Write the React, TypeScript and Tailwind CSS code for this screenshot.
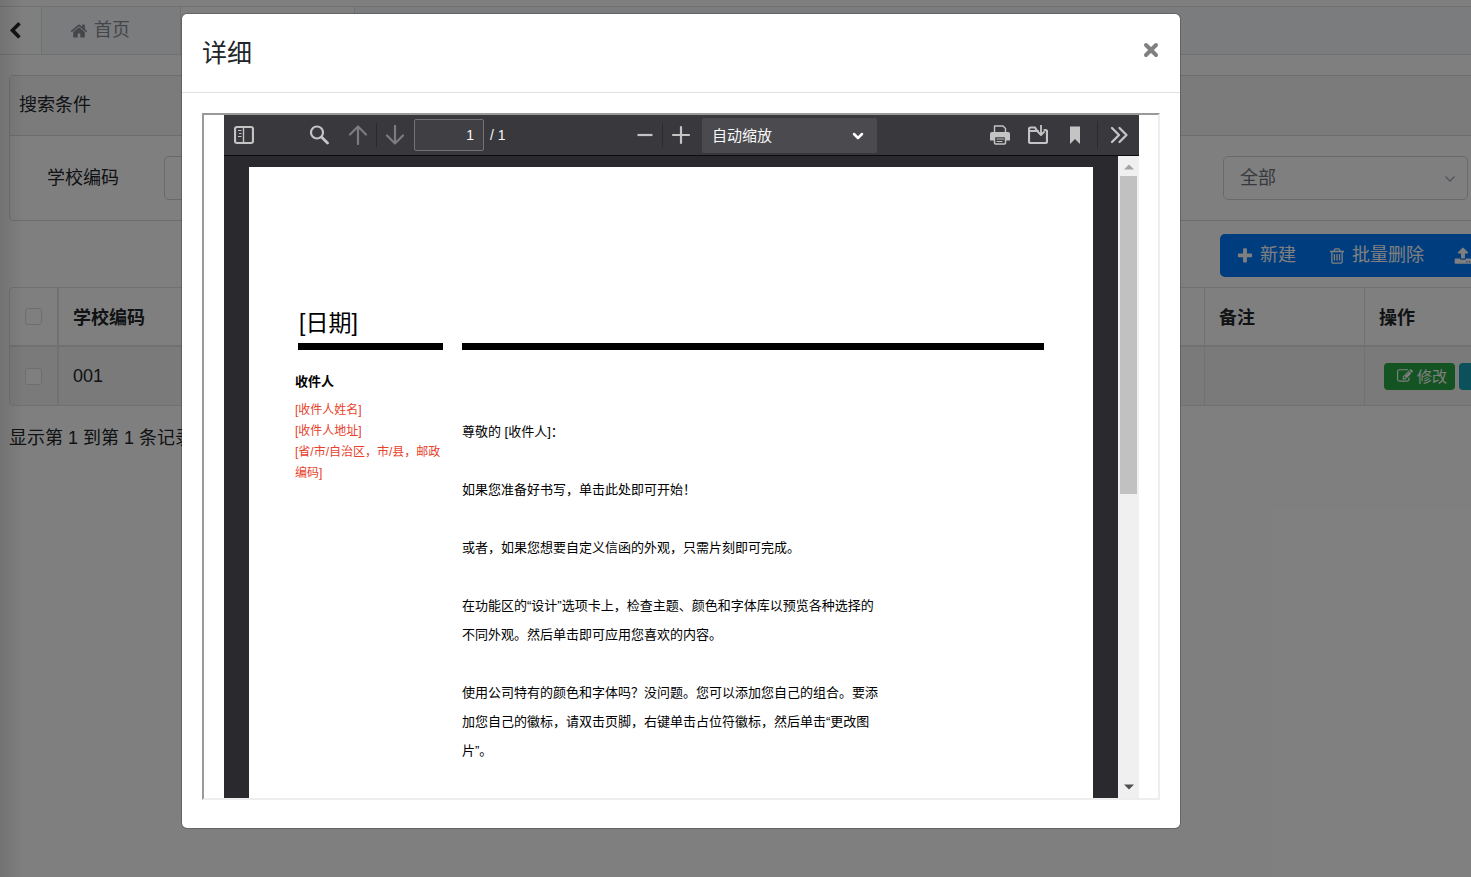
import React from "react";

const paths = {
  plus: "M1600 736v192q0 40-28 68t-68 28h-416v416q0 40-28 68t-68 28h-192q-40 0-68-28t-28-68v-416h-416q-40 0-68-28t-28-68v-192q0-40 28-68t68-28h416v-416q0-40 28-68t68-28h192q40 0 68 28t28 68v416h416q40 0 68 28t28 68z",
  trash:
    "M704 736v576q0 14-9 23t-23 9h-64q-14 0-23-9t-9-23v-576q0-14 9-23t23-9h64q14 0 23 9t9 23zm256 0v576q0 14-9 23t-23 9h-64q-14 0-23-9t-9-23v-576q0-14 9-23t23-9h64q14 0 23 9t9 23zm256 0v576q0 14-9 23t-23 9h-64q-14 0-23-9t-9-23v-576q0-14 9-23t23-9h64q14 0 23 9t9 23zm128 724v-948h-896v948q0 22 7 40.5t14.5 27 10.5 8.5h832q3 0 10.5-8.5t14.5-27 7-40.5zm-672-1076h448l-48-117q-7-9-17-11h-317q-10 2-17 11zm928 32v64q0 14-9 23t-23 9h-96v948q0 83-47 143.5t-113 60.5h-832q-66 0-113-58.5t-47-141.5v-952h-96q-14 0-23-9t-9-23v-64q0-14 9-23t23-9h309l70-167q15-37 54-63t79-26h320q40 0 79 26t54 63l70 167h309q14 0 23 9t9 23z",
  upload:
    "M1344 1472q0-26-19-45t-45-19-45 19-19 45 19 45 45 19 45-19 19-45zm256 0q0-26-19-45t-45-19-45 19-19 45 19 45 45 19 45-19 19-45zm128-224v320q0 40-28 68t-68 28h-1472q-40 0-68-28t-28-68v-320q0-40 28-68t68-28h427q21 56 70.5 92t110.5 36h256q61 0 110.5-36t70.5-92h427q40 0 68 28t28 68zm-325-648q-17 40-59 40h-256v448q0 26-19 45t-45 19h-256q-26 0-45-19t-19-45v-448h-256q-42 0-59-40-17-39 14-69l448-448q18-19 45-19t45 19l448 448q31 30 14 69z",
  home: "M1472 992v480q0 26-19 45t-45 19h-384v-384h-256v384h-384q-26 0-45-19t-19-45v-480q0-1 .5-3t.5-3l575-474 575 474q1 2 1 6zm223-69l-62 74q-8 9-21 11h-3q-13 0-21-7l-692-577-692 577q-12 8-24 7-13-2-21-11l-62-74q-8-10-7-23.5t11-21.5l719-599q32-26 76-26t76 26l244 204v-195q0-14 9-23t23-9h192q14 0 23 9t9 23v408l219 182q10 8 11 21.5t-7 23.5z",
  edit: "M888 1184l116-116-152-152-116 116v56h96v96h56zm440-720q-16-16-33 1l-350 350q-17 17-1 33t33-1l350-350q17-17 1-33zm80 594v190q0 119-84.5 203.5t-203.5 84.5h-832q-119 0-203.5-84.5t-84.5-203.5v-832q0-119 84.5-203.5t203.5-84.5h832q63 0 117 25 15 7 18 23 3 17-9 29l-49 49q-14 14-32 8-23-6-45-6h-832q-66 0-113 47t-47 113v832q0 66 47 113t113 47h832q66 0 113-47t47-113v-126q0-13 9-22l64-64q15-15 35-7t20 29zm-96-738l288 288-672 672h-288v-288zm444 132l-92 92-288-288 92-92q28-28 68-28t68 28l152 152q28 28 28 68t-28 68z",
  back: "M1427 301l-531 531 531 531q19 19 19 45t-19 45l-166 166q-19 19-45 19t-45-19l-742-742q-19-19-19-45t19-45l742-742q19-19 45-19t45 19l166 166q19 19 19 45t-19 45z",
};

function Glyph({ name, className }: { name: keyof typeof paths; className: string }) {
  return (
    <svg viewBox="0 0 1792 1792" fill="currentColor" className={className} aria-hidden="true">
      <path d={paths[name]} />
    </svg>
  );
}

function ToolButton({
  label,
  className,
  children,
}: {
  label: string;
  className: string;
  children: React.ReactNode;
}) {
  return (
    <button type="button" aria-label={label} className={`flex h-8 shrink-0 items-center justify-center ${className}`}>
      <svg
        viewBox="0 0 20 20"
        className="size-5"
        fill="none"
        stroke="currentColor"
        strokeWidth="2.200"
        strokeLinecap="round"
        strokeLinejoin="round"
      >
        {children}
      </svg>
    </button>
  );
}

function TabBar() {
  return (
    <nav className="flex h-[49px] border-y border-[#dee2e6] bg-[#f6f8fb]">
      <button type="button" aria-label="后退" className="flex w-[42px] items-center border-r border-[#dee2e6] bg-white pl-[6px]">
        <Glyph name="back" className="size-[18px] text-[#212529]" />
      </button>
      <a href="#home" className="flex w-[139px] items-center gap-[6px] border-r border-[#dee2e6] pl-7 text-[#868e96]">
        <Glyph name="home" className="size-[18px]" />
        首页
      </a>
      <div className="w-[174px] border-r border-[#dee2e6] bg-white" />
    </nav>
  );
}

function SearchPanel() {
  return (
    <section className="mt-5 rounded border border-[#dcdcdc]">
      <h2 className="flex h-[60px] items-center border-b border-[#dcdcdc] bg-[#f7f7f7] px-[9px]">搜索条件</h2>
      <form className="flex h-[84px] items-center justify-between pr-[63px] pl-[37px]">
        <div className="flex items-center">
          <label htmlFor="code" className="w-[117px]">
            学校编码
          </label>
          <input id="code" className="h-11 w-[245px] rounded-[5px] border border-[#ced4da] px-4" />
        </div>
        <div className="relative">
          <select
            aria-label="状态"
            className="h-11 w-[245px] appearance-none rounded-[5px] border border-[#ced4da] bg-white px-4 text-[#6c757d]"
          >
            <option>全部</option>
          </select>
          <svg
            viewBox="0 0 12 8"
            className="pointer-events-none absolute top-[19px] right-3 h-2 w-3"
            fill="none"
            stroke="#adb5bd"
            strokeWidth="1.6"
          >
            <path d="M1.500 1.500l4.500 4.500 4.500-4.500" />
          </svg>
        </div>
      </form>
    </section>
  );
}

function Actions() {
  const button = "flex items-center gap-[6px] px-4";
  return (
    <div className="mt-[13px] flex justify-end">
      <div className="flex h-[43px] rounded-[5px] bg-[#007bff] text-white">
        <button type="button" className={button}>
          <Glyph name="plus" className="size-[18px]" />
          新建
        </button>
        <button type="button" className={button}>
          <Glyph name="trash" className="size-[18px]" />
          批量删除
        </button>
        <button type="button" aria-label="导入" className="flex w-[92px] items-center pl-[14px]">
          <Glyph name="upload" className="size-[18px]" />
        </button>
      </div>
    </div>
  );
}

function Tick({ label }: { label: string }) {
  return (
    <input
      type="checkbox"
      aria-label={label}
      className="block size-[17px] appearance-none rounded-[3px] border border-[#dcdcdc] bg-white"
    />
  );
}

function Records() {
  const line = "border-[#dee2e6]";
  return (
    <div className={`mt-[10px] overflow-hidden rounded border ${line}`}>
      <table className="w-full table-fixed border-separate border-spacing-0 text-left">
        <thead>
          <tr className="h-[59px]">
            <th className={`w-[49px] border-r-2 border-b-2 pl-[15px] ${line}`}>
              <Tick label="全选" />
            </th>
            <th className={`border-b-2 px-[14px] pt-[3px] font-bold ${line}`}>学校编码</th>
            <th className={`w-[160px] border-b-2 border-l px-[14px] pt-[3px] font-bold ${line}`}>备注</th>
            <th className={`w-[167px] border-b-2 border-l px-[14px] pt-[3px] font-bold ${line}`}>操作</th>
          </tr>
        </thead>
        <tbody>
          <tr className="h-[58px] bg-[#f5f5f5]">
            <td className={`border-r-2 pl-[15px] ${line}`}>
              <Tick label="选择 001" />
            </td>
            <td className="px-[14px]">001</td>
            <td className={`border-l px-[14px] ${line}`} />
            <td className={`border-l pl-[19px] ${line}`}>
              <div className="flex gap-1 text-[15px] leading-[27px] text-white">
                <button type="button" className="flex h-[27px] w-[71px] shrink-0 items-center gap-1 rounded bg-[#28a745] pl-[13px]">
                  <Glyph name="edit" className="size-4" />
                  修改
                </button>
                <button type="button" aria-label="详细" className="h-[27px] w-[71px] shrink-0 rounded bg-[#17a2b8]" />
              </div>
            </td>
          </tr>
        </tbody>
      </table>
    </div>
  );
}

function Toolbar() {
  return (
    <div className="flex h-[41px] items-center justify-between border-b border-[#0c0c0d] bg-[#38383d] pr-[5px] text-[14px] text-[#c4c4c5]">
      <div className="flex w-[296px] items-center">
        <ToolButton label="切换侧栏" className="w-10">
          <rect x="1" y="2" width="18" height="16" rx="2" />
          <path d="M9.500 3v14" strokeWidth="1.4" />
          <path d="M4 5.500h3.500M5 8.500h2.500M4 11.500h3.500" strokeWidth="1.2" strokeLinecap="butt" />
        </ToolButton>
        <ToolButton label="查找" className="ml-[37px] w-9">
          <circle cx="8" cy="7.500" r="6" />
          <path d="M12.500 12l6 6" strokeWidth="2.800" />
        </ToolButton>
        <ToolButton label="上一页" className="ml-[3px] w-9 text-[#7c7c7f]">
          <path d="M10 19V1.500M2 9.500l8-8 8 8" />
        </ToolButton>
        <span className="h-6 w-px bg-[#2a2a2e]" />
        <ToolButton label="下一页" className="w-[35px] text-[#7c7c7f]">
          <path d="M10 1v17.500M2 10.500l8 8 8-8" />
        </ToolButton>
        <input
          aria-label="页码"
          defaultValue="1"
          className="ml-[2px] h-8 w-[70px] rounded-[2px] border border-[#737376] bg-[#404044] pr-[9px] text-right text-[#f9f9fa]"
        />
        <span className="ml-[6px] text-[#f9f9fa]">/ 1</span>
      </div>
      <div className="flex items-center">
        <ToolButton label="缩小" className="w-[34px]">
          <path d="M2.500 10h15" strokeLinecap="butt" />
        </ToolButton>
        <span className="h-6 w-px bg-[#2a2a2e]" />
        <ToolButton label="放大" className="w-9">
          <path d="M10 2v16M2 10h16" />
        </ToolButton>
        <div className="relative ml-[3px]">
          <select
            aria-label="缩放"
            className="h-[35px] w-[175px] appearance-none rounded-[2px] bg-[#4a4a4f] px-[10px] text-[15px] text-[#f9f9fa]"
          >
            <option>自动缩放</option>
          </select>
          <svg
            viewBox="0 0 12 8"
            className="pointer-events-none absolute top-[14px] right-[13px] h-2 w-3"
            fill="none"
            stroke="#ffffff"
            strokeWidth="2.500"
            strokeLinecap="round"
            strokeLinejoin="round"
          >
            <path d="M2 2l4 4 4-4" />
          </svg>
        </div>
      </div>
      <div className="flex items-center">
        <ToolButton label="打印" className="w-[30px]">
          <path d="M4.500 8V1h8.500L15.500 3.500V8" strokeWidth="1.400" />
          <path d="M2 7h16a2 2 0 0 1 2 2v6.500H0V9a2 2 0 0 1 2-2z" fill="currentColor" stroke="none" />
          <rect x="4.500" y="11.500" width="11" height="7.500" rx="1" fill="#38383d" strokeWidth="1.500" />
          <path d="M7 14h6.500M7 16.500h5" strokeWidth="1.200" />
        </ToolButton>
        <ToolButton label="下载" className="ml-2 w-[30px]">
          <path d="M8.500 5L7 2.500H2.500C1.500 2.500 1 3 1 4V16.500c0 1 .5 1.500 1.500 1.500h15c1 0 1.500-.5 1.500-1.500V6.500c0-1-.5-1.500-1.500-1.500H16.500M1 6h9" />
          <path d="M13 0v9.500M10 7l3 3 3-3" strokeWidth="1.800" />
        </ToolButton>
        <ToolButton label="书签" className="ml-[7px] w-[30px]">
          <path d="M5 1.500h10V19l-5-5-5 5z" fill="currentColor" stroke="none" />
        </ToolButton>
        <span className="ml-[7px] h-7 w-px bg-[#2a2a2e]" />
        <ToolButton label="工具" className="ml-[6px] w-[30px]">
          <path d="M3 3l7 7-7 7M10.500 3l7 7-7 7" strokeWidth="2.300" />
        </ToolButton>
      </div>
    </div>
  );
}

function Letter() {
  return (
    <article className="mt-[11px] ml-[25px] flex-1 overflow-hidden bg-white pt-[140px] text-[13px] text-black">
      <h2 className="pl-[50px] text-[23px] leading-8">[日期]</h2>
      <div className="mt-1 flex h-[7px] gap-[19px] px-[49px]">
        <div className="w-[145px] bg-black" />
        <div className="flex-1 bg-black" />
      </div>
      <div className="flex pl-[46px]">
        <aside className="w-[167px] shrink-0 pt-[22px]">
          <h3 className="leading-5 font-bold">收件人</h3>
          <p className="mt-2 text-[12px] leading-[21px] text-[#e8412c]">
            [收件人姓名]
            <br />
            [收件人地址]
            <br />
            [省/市/自治区，市/县，邮政
            <br />
            编码]
          </p>
        </aside>
        <div className="flex flex-col gap-[29px] pt-[67px] leading-[29px] whitespace-nowrap">
          <p>尊敬的 [收件人]：</p>
          <p>如果您准备好书写，单击此处即可开始！</p>
          <p>或者，如果您想要自定义信函的外观，只需片刻即可完成。</p>
          <p>
            在功能区的“设计”选项卡上，检查主题、颜色和字体库以预览各种选择的
            <br />
            不同外观。然后单击即可应用您喜欢的内容。
          </p>
          <p>
            使用公司特有的颜色和字体吗？没问题。您可以添加您自己的组合。要添
            <br />
            加您自己的徽标，请双击页脚，右键单击占位符徽标，然后单击“更改图
            <br />
            片”。
          </p>
        </div>
      </div>
    </article>
  );
}

function Scrollbar() {
  return (
    <div className="ml-[25px] flex w-[21px] shrink-0 flex-col items-center bg-[#f0f0f0]">
      <svg viewBox="0 0 10 6" className="mt-2 h-[6px] w-[10px]" fill="#a3a3a3">
        <path d="M0 5.500l5-5 5 5z" />
      </svg>
      <div className="mt-[6px] h-[318px] w-[17px] bg-[#c1c1c1]" />
      <svg viewBox="0 0 10 6" className="mt-auto mb-2 h-[6px] w-[10px]" fill="#505050">
        <path d="M0 .5l5 5 5-5z" />
      </svg>
    </div>
  );
}

function DetailDialog() {
  return (
    <div className="absolute inset-0 bg-black/50 pt-[13px] pr-[290px] pl-[181px]">
      <div
        role="dialog"
        aria-labelledby="dialog-title"
        className="rounded-md border border-black/20 bg-white bg-clip-padding"
      >
        <header className="flex h-[79px] items-center justify-between border-b border-[#dee2e6] px-5">
          <h1 id="dialog-title" className="text-[25px]">
            详细
          </h1>
          <button type="button" aria-label="关闭" className="pb-[6px]">
            <svg viewBox="0 0 18 18" className="size-[18px]" stroke="#808080" strokeWidth="4" strokeLinecap="round">
              <path d="M4 4l10 10M14 4l-10 10" />
            </svg>
          </button>
        </header>
        <div className="px-5 pt-5 pb-7">
          <div className="border-2 border-t-[#9a9a9a] border-r-[#eeeeee] border-b-[#eeeeee] border-l-[#9a9a9a] px-5 pr-[19px]">
            <Toolbar />
            <div className="flex h-[642px] bg-[#2a2a2e]">
              <Letter />
              <Scrollbar />
            </div>
          </div>
        </div>
      </div>
    </div>
  );
}

export default function App() {
  return (
    <div className="relative h-screen overflow-hidden bg-white pt-[6px] font-['Liberation_Sans','Noto_Sans_CJK_SC',sans-serif] text-[18px] leading-[27px] text-[#212529]">
      <TabBar />
      <main className="-mr-[61px] pl-[9px]">
        <SearchPanel />
        <Actions />
        <Records />
        <p className="mt-[19px]">显示第 1 到第 1 条记录</p>
      </main>
      <div className="absolute inset-y-0 left-0 w-6 bg-linear-to-r from-black/10 to-transparent" />
      <DetailDialog />
    </div>
  );
}
